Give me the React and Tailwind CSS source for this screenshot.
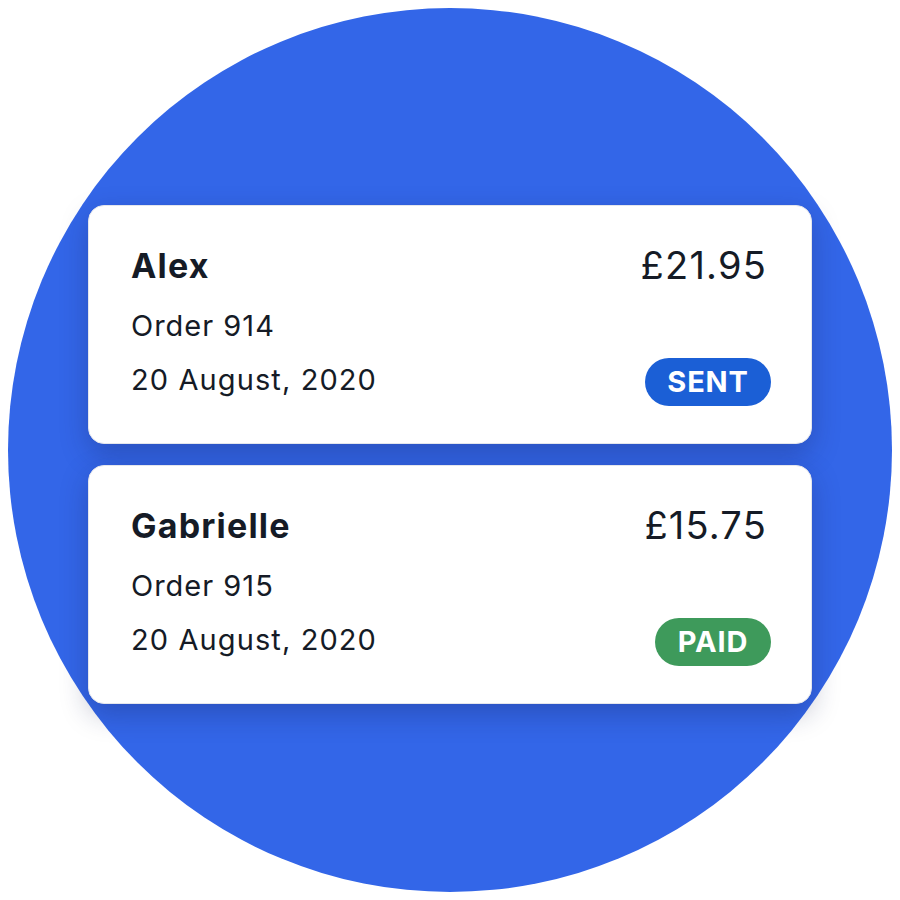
import React from 'react';

const orders = [
  { name: 'Alex', order: 'Order 914', date: '20 August, 2020', price: '£21.95', status: 'SENT' },
  { name: 'Gabrielle', order: 'Order 915', date: '20 August, 2020', price: '£15.75', status: 'PAID' },
];

const Badge = ({ status }) => {
  const color = status === 'SENT' ? 'bg-[#1b5fd6] w-[126px]' : 'bg-[#3e9a5b] w-[116px]';
  return (
    <span className={`${color} h-[48px] mt-[5px] rounded-full flex items-center justify-center text-white font-bold text-[29px] tracking-[0.8px]`}>
      {status}
    </span>
  );
};

const OrderCard = ({ item }) => (
  <div className="w-[724px] h-[239px] bg-white rounded-[16px] border border-[#e4e6ec] shadow-[0_10px_28px_rgba(20,30,80,0.28)] pl-[42px] pr-[40px] pt-[34px] text-[#151b26]">
    <div className="h-[52px] flex items-center justify-between">
      <span className="font-bold text-[34px] tracking-[1.2px]">{item.name}</span>
      <span className="text-[38px] tracking-[1.2px] mr-[4px]">{item.price}</span>
    </div>
    <div className="h-[68px] flex items-center text-[29px] tracking-[1px]">{item.order}</div>
    <div className="h-[40px] flex items-center justify-between">
      <span className="text-[29px] tracking-[1.1px]">{item.date}</span>
      <Badge status={item.status} />
    </div>
  </div>
);

export default function App() {
  return (
    <div className="w-[900px] h-[900px] bg-white flex items-center justify-center" style={{ fontFamily: 'Inter, "Noto Sans", sans-serif' }}>
      <div className="w-[884px] h-[884px] rounded-full bg-[#3366e8] flex flex-col items-center justify-center gap-[21px] pt-[8px]">
        {orders.map((item) => (
          <OrderCard key={item.order} item={item} />
        ))}
      </div>
    </div>
  );
}
